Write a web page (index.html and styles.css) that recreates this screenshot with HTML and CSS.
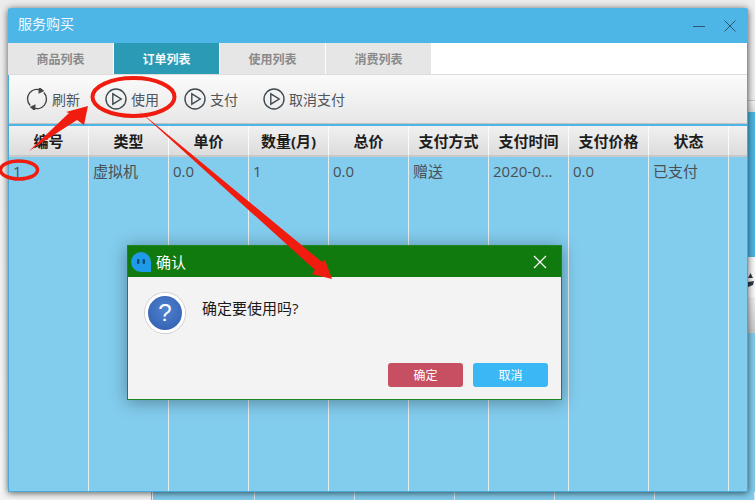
FILE: index.html
```html
<!DOCTYPE html>
<html lang="zh-CN">
<head>
<meta charset="UTF-8" />
<title>服务购买</title>
<link rel="stylesheet" href="styles.css">
</head>
<body>
  <!-- page behind the window, only its edges show -->
  <div class="behind-right">
    <div class="br-top"></div>
    <div class="br-light"></div>
    <div class="br-blue"></div>
    <div class="br-white">
      <svg width="7" height="14" viewBox="0 0 7 14"><path d="M0 5 2.5 0 5 5ZM0 9 6 8 5 12 0 14Z" fill="#2b3a4a"/></svg>
    </div>
    <div class="br-grey"></div>
    <div class="br-table"></div>
  </div>
  <div class="behind-bottom">
    <div class="bb-side"></div>
    <div class="bb-table">
      <span></span><span></span><span></span><span></span><span></span><span></span>
    </div>
  </div>

  <div class="window">
    <div class="titlebar">
      <span class="title">服务购买</span>
      <div class="win-btns">
        <svg width="14" height="14" viewBox="0 0 14 14"><path d="M1 7.5H13" stroke="#33566b" stroke-width="1"/></svg>
        <svg width="14" height="14" viewBox="0 0 14 14"><path d="M1.5 1.5 12.5 12.5M12.5 1.5 1.5 12.5" stroke="#33566b" stroke-width="1"/></svg>
      </div>
    </div>

    <div class="tabs">
      <div class="tab">商品列表</div>
      <div class="tab active">订单列表</div>
      <div class="tab">使用列表</div>
      <div class="tab">消费列表</div>
    </div>

    <div class="toolbar">
      <div class="tool">
        <svg class="tool-icon" viewBox="0 0 22 22" fill="none" stroke="#444" stroke-width="1.4">
          <path d="M4.2 17.5A9.6 9.6 0 0 1 3.6 4.9 9.6 9.6 0 0 1 15 2.3"/>
          <path d="M17.8 4.5A9.6 9.6 0 0 1 18.4 17.1 9.6 9.6 0 0 1 7 19.7"/>
          <path d="M13.5 0 17 2.8 13.2 4.6Z" fill="#444"/>
          <path d="M8.5 22 5 19.2 8.8 17.4Z" fill="#444"/>
        </svg>
        <span>刷新</span>
      </div>
      <div class="tool">
        <svg class="tool-icon" viewBox="0 0 22 22" fill="none" stroke="#3f4a50" stroke-width="1.4"><circle cx="11" cy="11" r="10"/><path d="M7.8 5.8V16.2L16.2 11Z"/></svg>
        <span>使用</span>
      </div>
      <div class="tool">
        <svg class="tool-icon" viewBox="0 0 22 22" fill="none" stroke="#3f4a50" stroke-width="1.4"><circle cx="11" cy="11" r="10"/><path d="M7.8 5.8V16.2L16.2 11Z"/></svg>
        <span>支付</span>
      </div>
      <div class="tool">
        <svg class="tool-icon" viewBox="0 0 22 22" fill="none" stroke="#3f4a50" stroke-width="1.4"><circle cx="11" cy="11" r="10"/><path d="M7.8 5.8V16.2L16.2 11Z"/></svg>
        <span>取消支付</span>
      </div>
    </div>

    <div class="grid">
      <div class="grid-head">
        <div class="th">编号</div>
        <div class="th">类型</div>
        <div class="th">单价</div>
        <div class="th">数量(月)</div>
        <div class="th">总价</div>
        <div class="th">支付方式</div>
        <div class="th">支付时间</div>
        <div class="th">支付价格</div>
        <div class="th">状态</div>
        <div class="th"></div>
      </div>
      <div class="grid-body">
        <div class="td">1</div>
        <div class="td">虚拟机</div>
        <div class="td">0.0</div>
        <div class="td">1</div>
        <div class="td">0.0</div>
        <div class="td">赠送</div>
        <div class="td">2020-0...</div>
        <div class="td">0.0</div>
        <div class="td">已支付</div>
        <div class="td"></div>
      </div>
    </div>
  </div>

  <div class="dialog">
    <div class="dialog-head">
      <svg class="dialog-logo" viewBox="0 0 20 20">
        <path d="M10 0A10 10 0 0 0 10 20H20V10A10 10 0 0 0 10 0Z" fill="#1e9be8"/>
        <rect x="6" y="7" width="2.4" height="5" rx="1" fill="#0c4a70"/>
        <rect x="11.6" y="7" width="2.4" height="5" rx="1" fill="#0c4a70"/>
      </svg>
      <span class="dialog-title">确认</span>
      <svg class="dialog-close" width="14" height="14" viewBox="0 0 14 14"><path d="M1 1 13 13M13 1 1 13" stroke="#fff" stroke-width="1.2"/></svg>
    </div>
    <div class="dialog-body">
      <div class="dialog-msg">
        <div class="ask-icon">?</div>
        <p>确定要使用吗?</p>
      </div>
      <div class="dialog-btns">
        <button class="btn btn-ok">确定</button>
        <button class="btn btn-cancel">取消</button>
      </div>
    </div>
  </div>

  <!-- red marks drawn on top of the screenshot -->
  <svg class="marks" width="755" height="500" viewBox="0 0 755 500">
    <ellipse cx="133.5" cy="97" rx="41" ry="19" fill="none" stroke="#f01c10" stroke-width="4"/>
    <ellipse cx="19" cy="170" rx="18.5" ry="9" fill="none" stroke="#f01c10" stroke-width="3.5"/>
    <polygon points="29,151 69,113 66,112 88,106 84,125 77,120" fill="#f01c10"/>
    <polygon points="138,110 322,262 325,260 332,279 312,274 315,270" fill="#f01c10"/>
  </svg>
</body>
</html>
```

FILE: styles.css
```css
html, body {
  margin: 0;
  height: 100%;
}
body {
  width: 755px;
  height: 500px;
  position: relative;
  overflow: hidden;
  background: linear-gradient(180deg, #ececec, #f6f6f6);
  font-family: "Open Sans", "Noto Sans CJK SC", sans-serif;
  font-size: 15px;
  color: #4a4f55;
}

/* what is left of the page behind */
.behind-right {
  position: absolute;
  left: 748px;
  top: 0;
  width: 7px;
  height: 500px;
  display: flex;
  flex-direction: column;
}
.br-top {
  height: 100px;
  background: #efefef;
  border-bottom: 1px solid #c8c8c8;
}
.br-light {
  height: 11px;
  background: linear-gradient(180deg, #f5f5f5, #dddddd);
}
.br-blue {
  height: 145px;
  background: #4db6e6;
}
.br-white {
  height: 40px;
  background: #f8f8f8;
  padding-top: 16px;
  box-sizing: border-box;
}
.br-white svg {
  display: block;
}
.br-grey {
  height: 36px;
  background: linear-gradient(180deg, #efefef, #c9c9c9);
}
.br-table {
  flex: 1;
  background: #82cced;
}
.behind-bottom {
  position: absolute;
  left: 0;
  top: 492px;
  width: 755px;
  height: 8px;
  display: flex;
}
.bb-side {
  width: 163px;
  background: #f4f4f4;
  background-image: linear-gradient(#aaa, #aaa);
  background-size: 1px 100%;
  background-position: 151px 0;
  background-repeat: no-repeat;
}
.bb-table {
  flex: 1;
  display: flex;
  background: #82cced;
}
.bb-table span {
  width: 100px;
  box-sizing: border-box;
  border-right: 1px solid #dfeaf0;
}
.bb-table span:first-child {
  width: 102px;
}

/* main window */
.window {
  position: absolute;
  left: 8px;
  top: 8px;
  width: 740px;
  height: 484px;
  box-sizing: border-box;
  display: flex;
  flex-direction: column;
  background: #fff;
  border-radius: 3px 3px 0 0;
  border: 1px solid #4aa9d6;
  border-top: 0;
  box-shadow: 0 1px 7px rgba(0, 0, 0, 0.65);
}
.titlebar {
  height: 35px;
  flex: none;
  box-sizing: border-box;
  display: flex;
  align-items: center;
  justify-content: space-between;
  margin: 0 -1px;
  padding: 0 11px 0 10px;
  background: #4db6e6;
  border-radius: 3px 3px 0 0;
}
.title {
  margin-bottom: 6px;
  color: #f2f8fb;
  font-size: 14px;
}
.win-btns {
  display: flex;
  gap: 17px;
}

.tabs {
  height: 31px;
  flex: none;
  display: flex;
  gap: 1px;
  margin-left: -1px;
  background: #fff;
  border-bottom: 1px solid #dcdcdc;
}
.tab {
  width: 105px;
  display: flex;
  align-items: center;
  justify-content: center;
  background: #e6e6e6;
  color: #8a8a8a;
  font-size: 12px;
  font-weight: 700;
}
.tab.active {
  background: #2a9ab5;
  color: #f4f9fb;
}

.toolbar {
  height: 49px;
  flex: none;
  box-sizing: border-box;
  display: flex;
  align-items: center;
  gap: 25px;
  padding-left: 17px;
  background: linear-gradient(180deg, #fbfbfb, #e7e7e7);
  border-bottom: 1px solid #c4c4c4;
}
.tool {
  display: flex;
  align-items: center;
  gap: 4px;
  font-size: 14px;
  color: #4f555a;
}
.tool-icon {
  width: 22px;
  height: 22px;
  flex: none;
}

.grid {
  flex: 1;
  display: flex;
  flex-direction: column;
  padding-top: 2px;
  background: #4db6e6;
}
.grid-head,
.grid-body {
  display: grid;
  grid-template-columns: repeat(9, 80px) 1fr;
}
.grid-head {
  height: 31px;
  flex: none;
  background: #82cced;
}
.th {
  box-sizing: border-box;
  display: flex;
  align-items: center;
  justify-content: center;
  background: linear-gradient(180deg, #f1f1f1, #dcdcdc);
  border-right: 1px solid #fbfbfb;
  border-bottom: 2px solid #c8c8c8;
  font-size: 15px;
  font-weight: 700;
  color: #1d1d1d;
}
.grid-body {
  flex: 1;
  background: #82cced;
}
.td {
  box-sizing: border-box;
  padding: 4px 2px 0 4px;
  border-right: 1px solid #e6eef2;
  line-height: 20px;
}
.td:last-child,
.th:last-child {
  border-right: 0;
}

/* confirm dialog */
.dialog {
  position: absolute;
  left: 127px;
  top: 245px;
  width: 435px;
  height: 155px;
  box-sizing: border-box;
  display: flex;
  flex-direction: column;
  background: #f3f3f3;
  border: 1px solid #1f8424;
  box-shadow: 0 2px 16px rgba(0, 0, 0, 0.35);
}
.dialog-head {
  height: 31px;
  flex: none;
  display: flex;
  align-items: center;
  gap: 5px;
  padding: 0 14px 0 3px;
  background: #117a0e;
}
.dialog-logo {
  width: 20px;
  height: 20px;
}
.dialog-title {
  flex: 1;
  color: #fff;
  font-size: 15px;
}
.dialog-body {
  flex: 1;
  display: flex;
  flex-direction: column;
  justify-content: space-between;
  padding: 16px 13px 12px 16px;
}
.dialog-msg {
  display: flex;
  gap: 17px;
}
.dialog-msg p {
  margin: 5px 0 0;
  font-size: 15px;
  line-height: 20px;
  color: #1a1a1a;
}
.ask-icon {
  width: 34px;
  height: 34px;
  border-radius: 50%;
  background: radial-gradient(circle at 50% 40%, #4f82d0, #2e5bab);
  border: 3px solid #fff;
  box-shadow: 0 0 0 1px #cfcfcf;
  display: flex;
  align-items: center;
  justify-content: center;
  margin-left: 1px;
  color: #fff;
  font-size: 24px;
  font-family: "Liberation Sans", sans-serif;
}
.dialog-btns {
  display: flex;
  justify-content: flex-end;
  gap: 10px;
}
.btn {
  width: 75px;
  height: 24px;
  padding: 0;
  border: 0;
  border-radius: 3px;
  color: #fff;
  font-family: inherit;
  font-size: 12px;
}
.btn-ok {
  background: #c64f62;
}
.btn-cancel {
  background: #3ab8f5;
}

.marks {
  position: absolute;
  left: 0;
  top: 0;
}
```
